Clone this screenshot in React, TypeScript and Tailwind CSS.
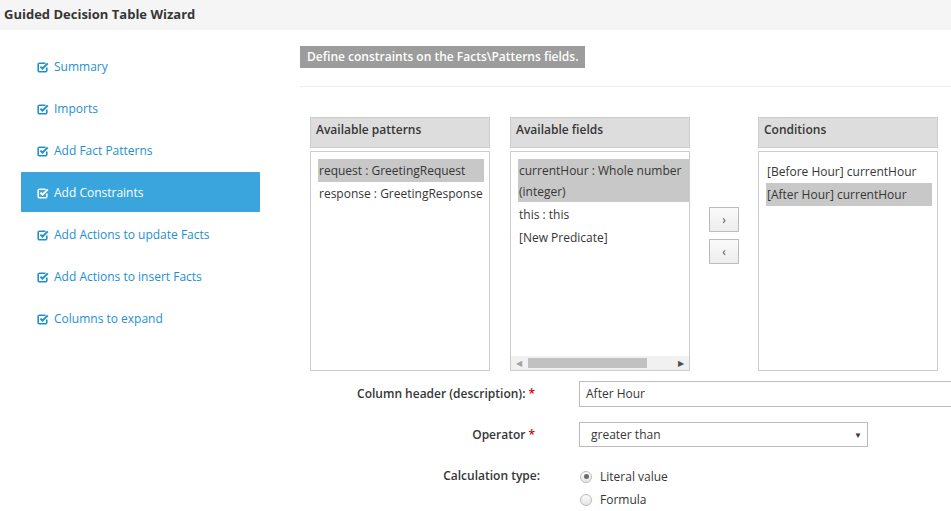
import React from "react";

const steps = [
  "Summary",
  "Imports",
  "Add Fact Patterns",
  "Add Constraints",
  "Add Actions to update Facts",
  "Add Actions to insert Facts",
  "Columns to expand",
];

function CheckSquare() {
  // fa check-square-o look-alike
  return (
    <svg width="12" height="12" viewBox="0 0 12 12" className="shrink-0">
      <path
        d="M8.5 2.2H2.6a1.4 1.4 0 0 0-1.4 1.4v5.8a1.4 1.4 0 0 0 1.4 1.4h5.8a1.4 1.4 0 0 0 1.4-1.4V6.6"
        fill="none"
        stroke="currentColor"
        strokeWidth="1.6"
      />
      <path d="M3.4 5.6l2.1 2.1 5.3-5.3" fill="none" stroke="currentColor" strokeWidth="2" />
    </svg>
  );
}

function Box({ title, children }: { title: string; children: React.ReactNode }) {
  return (
    <div className="w-[180px] shrink-0">
      <div className="h-[31px] border border-[#cccccc] bg-[#dddddd] px-[5px] pt-[3px] text-[12px] font-semibold text-[#363636]">
        {title}
      </div>
      <div className="relative mt-[3px] h-[220px] overflow-hidden border border-[#cccccc] bg-white">
        {children}
      </div>
    </div>
  );
}

export default function App() {
  return (
    <div
      className="w-[951px] h-[511px] overflow-hidden bg-white text-[#363636]"
      style={{ fontFamily: '"Open Sans", "Liberation Sans", sans-serif' }}
    >
      <div className="h-[30px] bg-[#f5f5f5] px-[4px] flex items-center">
        <h1 className="text-[13px] font-bold text-[#363636]">Guided Decision Table Wizard</h1>
      </div>

      <div className="flex">
        {/* wizard steps */}
        <div className="w-[300px] shrink-0 pt-[16px]">
          {steps.map((s, i) => (
            <div
              key={s}
              className={
                i === 3
                  ? "ml-[21px] mb-[2px] flex h-[40px] w-[239px] items-center gap-[5px] rounded-[1px] bg-[#39a5dc] pl-[16px] pt-[1px] text-[12px] text-white"
                  : "ml-[21px] mb-[2px] flex h-[40px] w-[239px] items-center gap-[5px] pl-[16px] pt-[1px] text-[12px] text-[#1e8fd2]"
              }
            >
              <CheckSquare />
              <span>{s}</span>
            </div>
          ))}
        </div>

        {/* main panel */}
        <div className="flex-1 pt-[16px]">
          <div className="h-[22px] w-fit bg-[#9c9c9c] px-[7px] text-[12px] font-semibold leading-[22px] text-white">
            Define constraints on the Facts\Patterns fields.
          </div>
          <div className="mt-[18px] border-t border-[#eeeeee]" />

          <div className="mt-[30px] flex pl-[10px]">
            <Box title="Available patterns">
              <div className="pt-[7px] pl-[7px] text-[12px] leading-[23px]">
                <div className="w-[166px] bg-[#c8c8c8] pl-[1px]">request : GreetingRequest</div>
                <div className="whitespace-nowrap pl-[1px]">response : GreetingResponse</div>
              </div>
            </Box>

            <div className="ml-[20px]">
              <Box title="Available fields">
                <div className="pt-[7px] pl-[7px] text-[12px] leading-[21px]">
                  <div className="w-[200px] bg-[#c8c8c8] pl-[1px] pt-[1px]">
                    currentHour : Whole number
                    <br />
                    (integer)
                  </div>
                  <div className="pl-[1px] pt-[1px] leading-[23px]">this : this</div>
                  <div className="pl-[1px] leading-[23px]">[New Predicate]</div>
                </div>
                <div className="absolute bottom-0 left-0 right-0 flex h-[14px] items-center bg-[#f1f1f1]">
                  <span className="ml-[5px] text-[8px] leading-none text-[#a3a3a3]">◀</span>
                  <div className="ml-[6px] h-[10px] w-[119px] bg-[#c1c1c1]" />
                  <span className="ml-auto mr-[5px] text-[8px] leading-none text-[#505050]">▶</span>
                </div>
              </Box>
            </div>

            <div className="ml-[19px] flex w-[30px] flex-col gap-[7px] pt-[90px]">
              <button className="h-[25px] w-[30px] border border-[#bbbbbb] bg-gradient-to-b from-[#fafafa] to-[#ededed] text-[12px] leading-none text-[#4d5258]">
                ›
              </button>
              <button className="h-[25px] w-[30px] border border-[#bbbbbb] bg-gradient-to-b from-[#fafafa] to-[#ededed] text-[12px] leading-none text-[#4d5258]">
                ‹
              </button>
            </div>

            <div className="ml-[19px]">
              <Box title="Conditions">
                <div className="pt-[7px] pl-[7px] text-[12px] leading-[23px]">
                  <div className="pl-[1px] pt-[1px]">[Before Hour] currentHour</div>
                  <div className="w-[166px] bg-[#c8c8c8] pl-[1px]">[After Hour] currentHour</div>
                </div>
              </Box>
            </div>
          </div>

          {/* form */}
          <div className="mt-[10px] text-[12px]">
            <div className="flex h-[26px] items-center">
              <div className="w-[240px] pr-[5px] text-right font-semibold">
                Column header (description):<span className="ml-[3px] text-[#cc0000]">*</span>
              </div>
              <div className="ml-[39px] flex h-[26px] w-[400px] items-center border border-[#bbbbbb] pl-[6px]">
                After Hour
              </div>
            </div>

            <div className="mt-[15px] flex h-[25px] items-center">
              <div className="w-[240px] pr-[5px] text-right font-semibold">
                Operator<span className="ml-[3px] text-[#cc0000]">*</span>
              </div>
              <div className="ml-[39px] flex h-[25px] w-[289px] items-center border border-[#bbbbbb] pl-[11px] pr-[5px]">
                <span>greater than</span>
                <span className="ml-auto text-[8px] text-[#363636]">▼</span>
              </div>
            </div>

            <div className="mt-[18px] flex">
              <div className="w-[240px] text-right font-semibold leading-[22px]">Calculation type:</div>
              <div className="ml-[40px] flex flex-col leading-[23px]">
                <label className="flex items-center gap-[8px]">
                  <span className="flex h-[12px] w-[12px] items-center justify-center rounded-full border border-[#bbbbbb] bg-gradient-to-b from-[#fafafa] to-[#e6e6e6]">
                    <span className="h-[5px] w-[5px] rounded-full bg-[#6a6a6a]" />
                  </span>
                  Literal value
                </label>
                <label className="flex items-center gap-[8px]">
                  <span className="h-[12px] w-[12px] rounded-full border border-[#bbbbbb] bg-gradient-to-b from-[#fafafa] to-[#e6e6e6]" />
                  Formula
                </label>
              </div>
            </div>
          </div>
        </div>
      </div>
    </div>
  );
}
